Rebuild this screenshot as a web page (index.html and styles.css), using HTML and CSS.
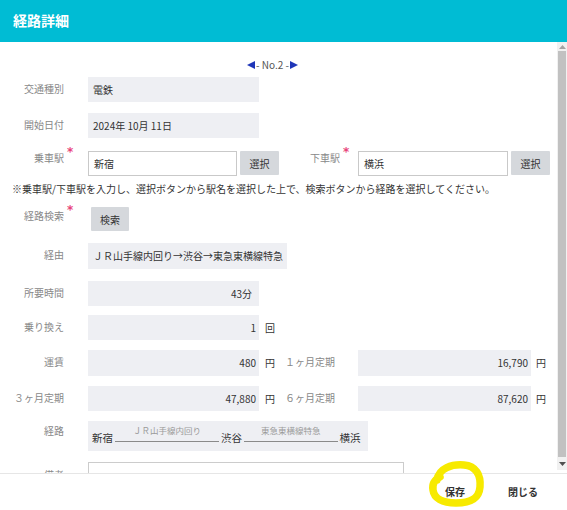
FILE: index.html
```html
<!DOCTYPE html>
<html lang="ja">
<head>
<meta charset="utf-8">
<title>経路詳細</title>
<link rel="stylesheet" href="styles.css">
</head>
<body>
<div class="dialog">
  <header class="header">経路詳細</header>
  <div class="main">
    <div class="content">
      <div class="nav">
        <svg class="nav-arrow" width="8" height="8" viewBox="0 0 8 8"><polygon points="0,4 8,0 8,8" fill="#1f36b8"/></svg>
        <span>- No.2 -</span>
        <svg class="nav-arrow" width="8" height="8" viewBox="0 0 8 8"><polygon points="8,4 0,0 0,8" fill="#1f36b8"/></svg>
      </div>

      <div class="row row-type">
        <div class="label">交通種別</div>
        <div class="box w171">電鉄</div>
      </div>

      <div class="row row-date">
        <div class="label">開始日付</div>
        <div class="box w171">2024年 10月 11日</div>
      </div>

      <div class="row row-station">
        <div class="label label-top"><span class="req">乗車駅</span></div>
        <div class="input">新宿</div>
        <button class="btn-gray btn-select">選択</button>
        <div class="label label-top label-to"><span class="req">下車駅</span></div>
        <div class="input input-to">横浜</div>
        <button class="btn-gray btn-select">選択</button>
      </div>

      <p class="note">※乗車駅/下車駅を入力し、選択ボタンから駅名を選択した上で、検索ボタンから経路を選択してください。</p>

      <div class="row row-search">
        <div class="label label-search"><span class="req">経路検索</span></div>
        <button class="btn-gray btn-search">検索</button>
      </div>

      <div class="row row-via">
        <div class="label">経由</div>
        <div class="box box-via">ＪＲ山手線内回り→渋谷→東急東横線特急</div>
      </div>

      <div class="row row-time">
        <div class="label">所要時間</div>
        <div class="box w171 num num-in">43分</div>
      </div>

      <div class="row row-transfer">
        <div class="label">乗り換え</div>
        <div class="box w171 num">1</div>
        <span class="unit">回</span>
      </div>

      <div class="row row-fare">
        <div class="label">運賃</div>
        <div class="box w171 num">480</div>
        <span class="unit">円</span>
        <div class="label label-col2">１ヶ月定期</div>
        <div class="box w173 num">16,790</div>
        <span class="unit unit-col2">円</span>
      </div>

      <div class="row row-pass">
        <div class="label">３ヶ月定期</div>
        <div class="box w171 num">47,880</div>
        <span class="unit">円</span>
        <div class="label label-col2">６ヶ月定期</div>
        <div class="box w173 num">87,620</div>
        <span class="unit unit-col2">円</span>
      </div>

      <div class="row row-route">
        <div class="label label-route">経路</div>
        <div class="box route">
          <span class="station">新宿</span>
          <span class="seg seg-1"><span class="seg-name">ＪＲ山手線内回り</span><span class="seg-line"></span></span>
          <span class="station">渋谷</span>
          <span class="seg"><span class="seg-name">東急東横線特急</span><span class="seg-line"></span></span>
          <span class="station">横浜</span>
        </div>
      </div>

      <div class="row row-memo">
        <div class="label label-memo">備考</div>
        <div class="textarea"></div>
      </div>
    </div>

    <div class="scrollbar">
      <div class="sb-btn">
        <svg width="7" height="4" viewBox="0 0 7 4"><polygon points="3.5,0 7,4 0,4" fill="#a3a3a3"/></svg>
      </div>
      <div class="sb-thumb"></div>
      <div class="sb-btn">
        <svg width="7" height="4" viewBox="0 0 7 4"><polygon points="0,0 7,0 3.5,4" fill="#505050"/></svg>
      </div>
    </div>
  </div>

  <footer class="footer">
    <button class="foot-btn">保存</button>
    <button class="foot-btn">閉じる</button>
  </footer>

  <svg class="scribble" width="567" height="510" viewBox="0 0 567 510">
    <path d="M437 480 C439 468 452 464 464 465 C476 466 481 475 480 487 C479 499 470 503 456 503 C442 503 434 498 433 490 C432 484 434 480 440 477" fill="none" stroke="#f7ea00" stroke-width="7.5" stroke-linecap="round" stroke-linejoin="round"/>
  </svg>
</div>
</body>
</html>
```

FILE: styles.css
```css
* { box-sizing: border-box; }

html, body {
  margin: 0;
  padding: 0;
  background: #ffffff;
}

body {
  font-family: "Noto Sans CJK JP", "Noto Sans", "Liberation Sans", sans-serif;
  color: #333333;
}

.dialog {
  position: relative;
  width: 567px;
  height: 510px;
  display: flex;
  flex-direction: column;
  overflow: hidden;
  background: #ffffff;
}

.header {
  height: 42px;
  flex: none;
  background: #00bcd4;
  color: #ffffff;
  font-size: 14px;
  font-weight: bold;
  line-height: 40px;
  padding-left: 13px;
}

.main {
  height: 431px;
  flex: none;
  display: flex;
}

.content {
  flex: 1;
  overflow: hidden;
  padding: 12px 0 0 12px;
  font-size: 10px;
}

/* nav */
.nav {
  height: 21px;
  margin: 0 0 2px -12px;
  padding-right: 12px;
  display: flex;
  justify-content: center;
  align-items: center;
  gap: 1px;
  color: #555555;
  font-size: 10px;
}

.nav-arrow { display: block; }

/* rows */
.row {
  display: flex;
  align-items: flex-start;
}

.row-type { margin-bottom: 11px; }
.row-date { margin-bottom: 13px; }
.row-station { margin-bottom: 6px; }
.row-search { margin-bottom: 12px; }
.row-via { margin-bottom: 12px; }
.row-time { margin-bottom: 9px; }
.row-transfer { margin-bottom: 10px; }
.row-fare { margin-bottom: 10px; }
.row-pass { margin-bottom: 10px; }
.row-route { margin-bottom: 11px; }

.label {
  flex: none;
  width: 52px;
  margin-right: 24px;
  text-align: right;
  font-size: 10px;
  line-height: 14px;
  padding-top: 5px;
  color: #888888;
  white-space: nowrap;
}

.label-top { padding-top: 0; }
.label-search { padding-top: 2px; }
.label-route { padding-top: 3px; }
.label-memo { padding-top: 6px; }

.label-to {
  width: 61px;
  margin-right: 18px;
}

.label-col2 {
  width: 60px;
  margin-right: 23px;
}

.req { position: relative; }
.req::after {
  content: "*";
  position: absolute;
  left: 100%;
  top: -5px;
  margin-left: 3px;
  font-family: "DejaVu Sans", sans-serif;
  font-size: 12px;
  font-weight: bold;
  color: #e8457a;
}

.box {
  flex: none;
  height: 25px;
  background: #eeeff3;
  color: #333333;
  font-size: 10px;
  line-height: 25px;
  padding: 0 5px;
  white-space: nowrap;
}

.w171 { width: 171px; }
.w173 { width: 173px; }

.row-fare .box { height: 26px; line-height: 26px; }

.num {
  text-align: right;
  padding-right: 3px;
}

.num-in { padding-right: 7px; }

.box-via {
  padding: 0 4px 0 5px;
  height: 26px;
  line-height: 26px;
}

.unit {
  flex: none;
  font-size: 10px;
  line-height: 25px;
  margin-left: 6px;
  width: 10px;
  color: #333333;
}

.unit-col2 { margin-left: 5px; }

/* inputs */
.input {
  flex: none;
  width: 149px;
  height: 25px;
  border: 1px solid #c9c9c9;
  background: #ffffff;
  padding: 0 5px;
  font-size: 10px;
  line-height: 23px;
  color: #333333;
}

.input-to { width: 150px; }

.btn-gray {
  flex: none;
  height: 24px;
  border: none;
  border-radius: 1px;
  background: #d5d8dc;
  color: #333333;
  font-family: inherit;
  font-size: 10px;
  padding: 0;
  margin: 0;
}

.btn-select {
  width: 39px;
  margin-left: 3px;
}

.btn-search {
  width: 38px;
  margin-left: 3px;
}

.note {
  margin: 0 0 11px 0;
  font-size: 10px;
  line-height: 14px;
  color: #333333;
  white-space: nowrap;
}

/* route diagram */
.route {
  width: 280px;
  height: 30px;
  display: flex;
  align-items: flex-end;
  padding: 0 4px 7px 4px;
  line-height: 12px;
}

.station {
  font-size: 10.5px;
  line-height: 12px;
  color: #333333;
}

.seg {
  display: flex;
  flex-direction: column;
  align-items: stretch;
  margin: 0 2px 2px 2px;
}

.seg-name {
  font-size: 8.5px;
  line-height: 10px;
  color: #9a9a9a;
  text-align: center;
  padding: 0 17px;
  margin-bottom: 6px;
}

.seg-1 .seg-name { padding: 0 18px; }

.seg-line {
  height: 1px;
  background: #8a8a8a;
}

.textarea {
  flex: none;
  width: 316px;
  height: 40px;
  border: 1px solid #cccccc;
  background: #ffffff;
}

/* scrollbar */
.scrollbar {
  flex: none;
  width: 10px;
  height: 428px;
  background: #f1f1f1;
  display: flex;
  flex-direction: column;
  align-items: stretch;
}

.sb-btn {
  height: 9px;
  display: flex;
  align-items: center;
  justify-content: center;
  flex: none;
}

.sb-btn svg { display: block; }

.sb-thumb {
  flex: 1;
  margin: 0 1px;
  background: #c1c1c1;
}

.sb-btn:last-child { height: 13px; }

/* footer */
.footer {
  flex: 1;
  border-top: 1px solid #e6e6e6;
  display: flex;
  justify-content: flex-end;
  align-items: center;
  gap: 43px;
  padding-right: 29px;
}

.foot-btn {
  background: transparent;
  border: none;
  padding: 0;
  margin: 0;
  font-family: inherit;
  font-size: 10px;
  font-weight: bold;
  color: #333333;
  line-height: 14px;
}

.scribble {
  position: absolute;
  left: 0;
  top: 0;
  pointer-events: none;
}
```
